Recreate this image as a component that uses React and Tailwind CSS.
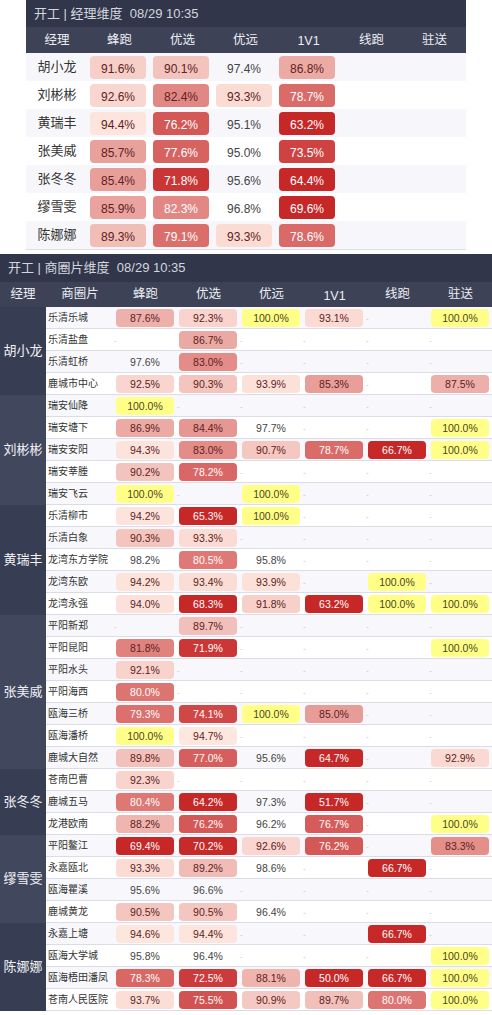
const FONT = { fontFamily: '"Liberation Sans", "Noto Sans CJK SC", sans-serif' };

const COLS = ["蜂跑", "优选", "优远", "1V1", "线跑", "驻送"];

const managers = [
  ["胡小龙", [91.6, 90.1, 97.4, 86.8, null, null]],
  ["刘彬彬", [92.6, 82.4, 93.3, 78.7, null, null]],
  ["黄瑞丰", [94.4, 76.2, 95.1, 63.2, null, null]],
  ["张美威", [85.7, 77.6, 95.0, 73.5, null, null]],
  ["张冬冬", [85.4, 71.8, 95.6, 64.4, null, null]],
  ["缪雪雯", [85.9, 82.3, 96.8, 69.6, null, null]],
  ["陈娜娜", [89.3, 79.1, 93.3, 78.6, null, null]],
];

const _ = null;
const groups = [
  ["胡小龙", [
    ["乐清乐城", [87.6, 92.3, 100, 93.1, _, 100]],
    ["乐清盐盘", [_, 86.7, _, _, _, _]],
    ["乐清虹桥", [97.6, 83.0, _, _, _, _]],
    ["鹿城市中心", [92.5, 90.3, 93.9, 85.3, _, 87.5]],
  ]],
  ["刘彬彬", [
    ["瑞安仙降", [100, _, _, _, _, _]],
    ["瑞安塘下", [86.9, 84.4, 97.7, _, _, 100]],
    ["瑞安安阳", [94.3, 83.0, 90.7, 78.7, 66.7, 100]],
    ["瑞安莘塍", [90.2, 78.2, _, _, _, _]],
    ["瑞安飞云", [100, _, 100, _, _, _]],
  ]],
  ["黄瑞丰", [
    ["乐清柳市", [94.2, 65.3, 100, _, _, _]],
    ["乐清白象", [90.3, 93.3, _, _, _, _]],
    ["龙湾东方学院", [98.2, 80.5, 95.8, _, _, _]],
    ["龙湾东欧", [94.2, 93.4, 93.9, _, 100, _]],
    ["龙湾永强", [94.0, 68.3, 91.8, 63.2, 100, 100]],
  ]],
  ["张美威", [
    ["平阳新郑", [_, 89.7, _, _, _, _]],
    ["平阳昆阳", [81.8, 71.9, _, _, _, 100]],
    ["平阳水头", [92.1, _, _, _, _, _]],
    ["平阳海西", [80.0, _, _, _, _, _]],
    ["瓯海三桥", [79.3, 74.1, 100, 85.0, _, _]],
    ["瓯海潘桥", [100, 94.7, _, _, _, _]],
    ["鹿城大自然", [89.8, 77.0, 95.6, 64.7, _, 92.9]],
  ]],
  ["张冬冬", [
    ["苍南巴曹", [92.3, _, _, _, _, _]],
    ["鹿城五马", [80.4, 64.2, 97.3, 51.7, _, _]],
    ["龙港欧南", [88.2, 76.2, 96.2, 76.7, _, 100]],
  ]],
  ["缪雪雯", [
    ["平阳鳌江", [69.4, 70.2, 92.6, 76.2, _, 83.3]],
    ["永嘉瓯北", [93.3, 89.2, 98.6, _, 66.7, _]],
    ["瓯海瞿溪", [95.6, 96.6, _, _, _, _]],
    ["鹿城黄龙", [90.5, 90.5, 96.4, _, _, _]],
  ]],
  ["陈娜娜", [
    ["永嘉上塘", [94.6, 94.4, _, _, 66.7, _]],
    ["瓯海大学城", [95.8, 96.4, _, _, _, 100]],
    ["瓯海梧田潘凤", [78.3, 72.5, 88.1, 50.0, 66.7, 100]],
    ["苍南人民医院", [93.7, 75.5, 90.9, 89.7, 80.0, 100]],
  ]],
];

// red scale: 70% -> deep red, 95% -> near white
function tone(v, whiteBelow) {
  if (v >= 100) return { bg: "#ffff88", fg: "#4d4520" };
  if (v >= 95) return { bg: "transparent", fg: "#444" };
  const t = Math.max(0, Math.min(1, (v - 70) / 25));
  const mix = (a, b) => Math.round(a + (b - a) * t);
  const bg = `rgb(${mix(198, 254)}, ${mix(40, 233)}, ${mix(40, 225)})`;
  return { bg, fg: v < whiteBelow ? "#ffffff" : "#5e2222" };
}

function Pill({ v, big }) {
  if (v == null) {
    if (big) return null;
    return (
      <div className="flex h-full items-end justify-center pb-[5px] text-[8px] leading-none text-[#c4c4cc]">-</div>
    );
  }
  const c = tone(v, big ? 82.35 : 81.5);
  return (
    <div
      className={
        big
          ? "ml-[2px] flex h-[23px] w-[56px] items-center justify-center rounded-[4px] pt-[3px] text-[12px]"
          : "ml-[2px] flex h-[18px] w-[58px] items-center justify-center rounded-[4px] pt-[2px] text-[10.5px]"
      }
      style={{ background: c.bg, color: c.fg }}
    >
      {v.toFixed(1)}%
    </div>
  );
}

function ManagerTable() {
  return (
    <div className="ml-[26px] w-[440px]">
      <div className="flex h-[27px] items-center bg-[#31364a] pl-[8px] text-[13px] text-[#d3d6df]">
        开工 | 经理维度&nbsp;&nbsp;08/29 10:35
      </div>
      <div className="grid h-[26px] grid-cols-[62px_repeat(6,63px)] items-center bg-[#3d4257] text-[12.5px] text-[#eceef3]">
        <div className="text-center">经理</div>
        {COLS.map((c) => (
          <div key={c} className={c === "1V1" ? "pt-[3px] text-center" : "text-center"}>
            {c}
          </div>
        ))}
      </div>
      {managers.map(([name, vals], i) => (
        <div
          key={name}
          className={
            "grid h-[28px] grid-cols-[62px_repeat(6,63px)] items-center " +
            (i % 2 === 0 ? "bg-[#f7f7fb]" : "bg-white")
          }
        >
          <div className="text-center text-[13px] text-[#333]">{name}</div>
          {vals.map((v, j) => (
            <div key={j} className="flex h-full items-center">
              <Pill v={v} big />
            </div>
          ))}
        </div>
      ))}
      <div className="h-px bg-[#dcdce6]" />
    </div>
  );
}

function AreaTable() {
  let rowNo = 0;
  return (
    <div className="mt-[4px] w-[492px]">
      <div className="flex h-[28px] items-center bg-[#31364a] pl-[8px] text-[13px] text-[#d3d6df]">
        开工 | 商圈片维度&nbsp;&nbsp;08/29 10:35
      </div>
      <div className="grid h-[25px] grid-cols-[46px_68px_repeat(6,63px)] items-center bg-[#3d4257] text-[12.5px] text-[#eceef3]">
        <div className="text-center">经理</div>
        <div className="text-center">商圈片</div>
        {COLS.map((c) => (
          <div key={c} className={c === "1V1" ? "pt-[3px] text-center" : "text-center"}>
            {c}
          </div>
        ))}
      </div>
      {groups.map(([name, rows], gi) => (
        <div key={name} className="flex">
          <div
            className={
              "flex w-[46px] items-center justify-center text-[13px] text-[#f1f2f6] " +
              (gi % 2 === 0 ? "bg-[#373d52]" : "bg-[#41475d]")
            }
          >
            {name}
          </div>
          <div className="flex w-[446px] flex-col">
            {rows.map(([area, vals]) => {
              const odd = rowNo++ % 2 === 0;
              return (
                <div
                  key={area}
                  className={
                    "grid h-[22px] grid-cols-[68px_repeat(6,63px)] border-b border-[#dcdce6] " +
                    (odd ? "bg-[#f8f8fc]" : "bg-white")
                  }
                >
                  <div className="flex items-center pl-[2px] text-[10px] text-[#333]">{area}</div>
                  {vals.map((v, j) => (
                    <div key={j} className="flex h-full items-center">
                      <Pill v={v} />
                    </div>
                  ))}
                </div>
              );
            })}
          </div>
        </div>
      ))}
    </div>
  );
}

export default function App() {
  return (
    <div className="min-h-[1015px] w-[492px] bg-white" style={FONT}>
      <ManagerTable />
      <AreaTable />
    </div>
  );
}
